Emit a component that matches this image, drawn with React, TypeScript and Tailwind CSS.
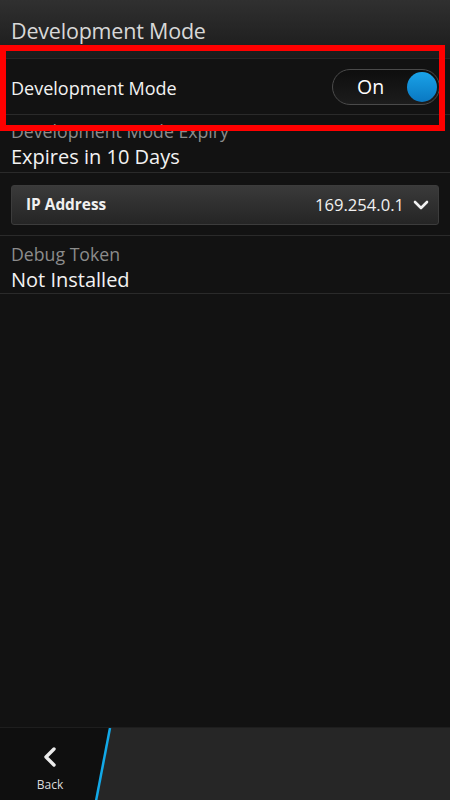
import React from "react";

export default function App() {
  const font = { fontFamily: '"Open Sans", "Noto Sans", sans-serif' };
  return (
    <div
      className="relative w-[450px] h-[800px] bg-[#121212] flex flex-col overflow-hidden"
      style={font}
    >
      {/* Title bar */}
      <div className="h-[58px] bg-gradient-to-b from-[#303030] to-[#1b1b1b] flex items-end pb-[17px] px-[11px]">
        <span className="text-[21.5px] leading-none text-[#d8d8d8] tracking-[-0.2px]">Development Mode</span>
      </div>

      {/* Toggle row */}
      <div className="h-[57px] border-t border-[#262626] border-b border-b-[#2a2a2a] flex items-center justify-between pl-[11px] pr-[10px]">
        <span className="mt-[3px] text-[18px] text-[#f2f2f2]">Development Mode</span>
        <div className="w-[108px] h-[36px] rounded-full border border-[#4a4a4a] bg-gradient-to-b from-[#0e0e0e] to-[#1c1c1c] flex items-center justify-between pl-[24px] pr-[2px]">
          <span className="text-[19.5px] text-white">On</span>
          <div className="w-[30px] h-[30px] rounded-full bg-gradient-to-b from-[#1aa3e8] to-[#0a78c2]" />
        </div>
      </div>

      {/* Expiry */}
      <div className="h-[58px] border-b border-[#2a2a2a] flex flex-col pt-[6px] px-[11px]">
        <span className="text-[17.7px] leading-[20px] text-[#8c8c8c]">Development Mode Expiry</span>
        <span className="mt-[1px] text-[20px] leading-[30px] text-[#f2f2f2]">Expires in 10 Days</span>
      </div>

      {/* IP dropdown */}
      <div className="h-[63px] border-b border-[#2a2a2a] flex items-center px-[11px] pt-[2px]">
        <div className="w-full h-[40px] rounded-[3px] border border-[#3c3c3c] bg-gradient-to-b from-[#3a3a3a] to-[#252525] flex items-center justify-between pl-[14px] pr-[9px]">
          <span className="text-[15.4px] font-bold text-[#f0f0f0]">IP Address</span>
          <div className="flex items-center gap-[9px]">
            <span className="text-[16.6px] text-[#f0f0f0]">169.254.0.1</span>
            <svg width="16" height="10" viewBox="0 0 16 10">
              <path d="M2 2 L8 8 L14 2" fill="none" stroke="#f0f0f0" strokeWidth="2.6" strokeLinecap="round" strokeLinejoin="round" />
            </svg>
          </div>
        </div>
      </div>

      {/* Debug Token */}
      <div className="h-[58px] border-b border-[#2a2a2a] flex flex-col pt-[8px] px-[11px]">
        <span className="text-[17.7px] leading-[20px] text-[#8c8c8c]">Debug Token</span>
        <span className="mt-[1px] text-[20px] leading-[30px] text-[#f2f2f2]">Not Installed</span>
      </div>

      <div className="flex-1" />

      {/* Bottom action bar */}
      <div className="relative h-[73px] bg-[#0f0f0f] border-t border-[#1e1e1e]">
        <svg className="absolute inset-0" width="450" height="73" viewBox="0 0 450 73">
          <polygon points="110,0 450,0 450,73 96,73" fill="#262626" />
          <line x1="110" y1="0" x2="96" y2="73" stroke="#12a9e8" strokeWidth="2.5" />
        </svg>
        <div className="relative w-[100px] h-full flex flex-col items-center pt-[19px]">
          <svg width="14" height="20" viewBox="0 0 14 20">
            <path d="M11 2 L3 10 L11 18" fill="none" stroke="#ececec" strokeWidth="3.4" strokeLinecap="round" strokeLinejoin="round" />
          </svg>
          <span className="mt-[12px] text-[12px] leading-none text-[#dcdcdc]">Back</span>
        </div>
      </div>

      {/* Red annotation box */}
      <div className="absolute left-0 top-[45px] w-[445px] h-[86px] border-[6px] border-[#ff0000] pointer-events-none" />
    </div>
  );
}
